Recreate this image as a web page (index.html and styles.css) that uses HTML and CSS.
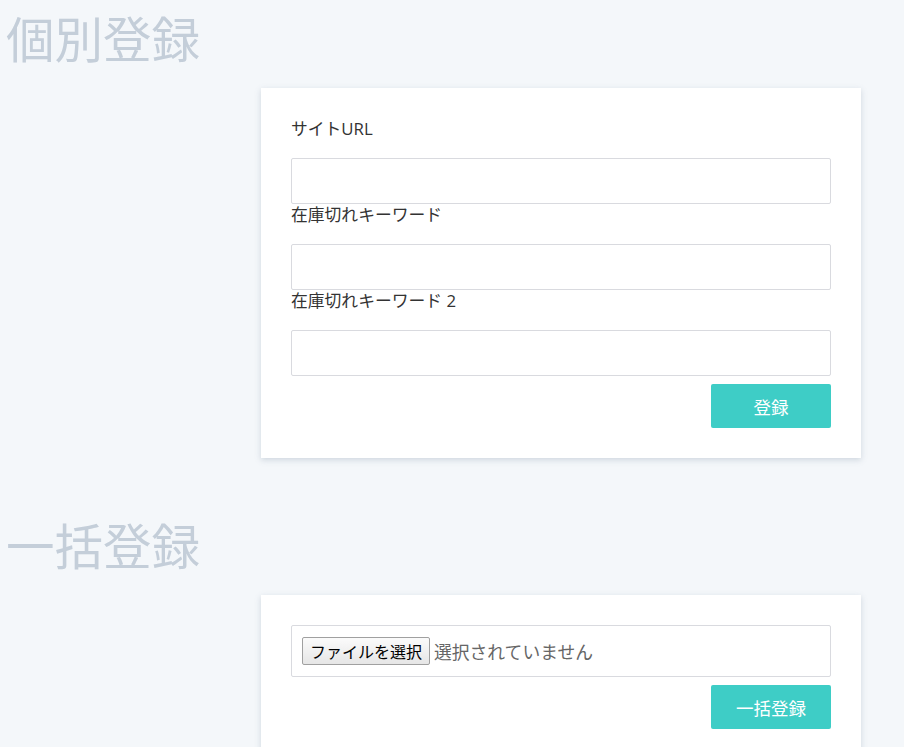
FILE: index.html
```html
<!DOCTYPE html>
<html lang="ja">
<head>
<meta charset="utf-8">
<title>登録</title>
<link rel="stylesheet" href="styles.css">
</head>
<body>
<section class="section">
  <h1 class="title">個別登録</h1>
  <div class="card">
    <label class="label">サイトURL</label>
    <input class="input" type="text">
    <label class="label">在庫切れキーワード</label>
    <input class="input" type="text">
    <label class="label">在庫切れキーワード 2</label>
    <input class="input" type="text">
    <div class="actions"><button class="btn">登録</button></div>
  </div>
</section>
<section class="section">
  <h1 class="title">一括登録</h1>
  <div class="card card-bulk">
    <div class="filebox">
      <span class="filebtn">ファイルを選択</span>
      <span class="filetext">選択されていません</span>
    </div>
    <div class="actions"><button class="btn">一括登録</button></div>
  </div>
</section>
</body>
</html>
```
FILE: styles.css
```css
html, body {
  margin: 0;
  padding: 0;
  background: #f4f7fa;
  font-family: "Open Sans", "Noto Sans CJK JP", sans-serif;
  color: #333;
}
.section {
  margin-bottom: 49px;
}
.title {
  margin: 0;
  padding: 0 0 0 6px;
  height: 88px;
  font-family: "Noto Sans CJK JP", sans-serif;
  font-weight: 400;
  font-size: 48.5px;
  line-height: 75px;
  color: #c4ced9;
}
.card {
  margin-left: 261px;
  width: 600px;
  box-sizing: border-box;
  background: #fff;
  padding: 30px;
  box-shadow: 0 2px 6px rgba(120, 140, 160, 0.3);
}
.label {
  display: block;
  font-size: 16.8px;
  line-height: 22px;
  margin-bottom: 18px;
}
.input {
  display: block;
  width: 100%;
  box-sizing: border-box;
  height: 46px;
  border: 1px solid #d9dadf;
  border-radius: 2px;
  background: #fff;
  margin: 0;
  outline: none;
}
.actions {
  display: flex;
  justify-content: flex-end;
  margin-top: 8px;
}
.btn {
  width: 120px;
  height: 44px;
  border: 0;
  border-radius: 2px;
  background: #3ecdc6;
  color: #fff;
  font-family: "Open Sans", "Noto Sans CJK JP", sans-serif;
  font-size: 17.5px;
  padding: 0;
}
.filebox {
  display: flex;
  align-items: center;
  height: 52px;
  box-sizing: border-box;
  border: 1px solid #d9dadf;
  border-radius: 2px;
  padding: 0 10px;
}
.filebtn {
  display: inline-flex;
  align-items: center;
  height: 28px;
  box-sizing: border-box;
  padding: 0 7px;
  border: 1px solid #a0a0a0;
  border-radius: 2px;
  background: linear-gradient(#fbfbfb, #e6e6e6);
  color: #000;
  font-size: 16px;
  font-family: "Noto Sans CJK JP", sans-serif;
}
.filetext {
  margin-left: 4px;
  font-size: 17.8px;
  color: #666;
  font-family: "Noto Sans CJK JP", sans-serif;
}
```
